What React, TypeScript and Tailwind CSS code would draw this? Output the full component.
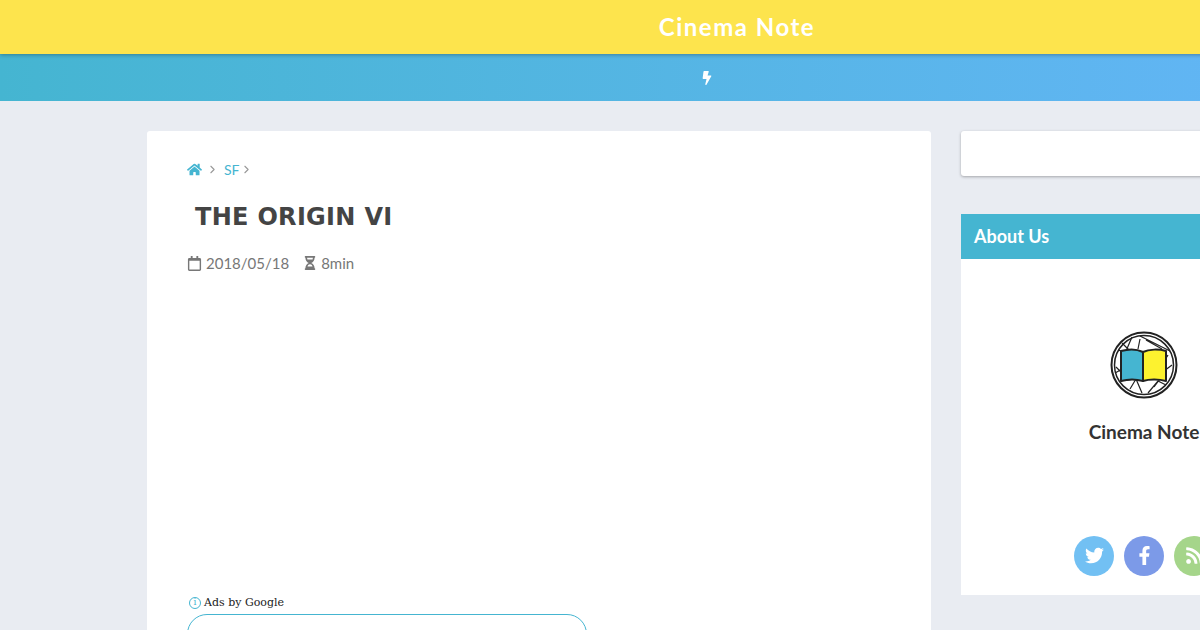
import { FaHome, FaBolt, FaTwitter, FaFacebookF, FaRss, FaRegCalendar, FaHourglassHalf } from "react-icons/fa";
import { LuChevronRight } from "react-icons/lu";

const round = { fontFamily: '"Lato", "Noto Sans", sans-serif' };

function Logo() {
  return (
    <svg width="68" height="68" viewBox="0 0 68 68" aria-hidden="true">
      <circle cx="34" cy="34" r="32.5" fill="#fff" stroke="#222" strokeWidth="2" />
      <circle cx="34" cy="34" r="29.5" fill="#fff" stroke="#222" strokeWidth="1.5" />
      <g stroke="#222" strokeWidth="1.2" fill="none">
        <path d="M8 19 L24 24 M12 12 L22 22 M22 6 L16 20 M30 5 L44 12 L60 20 M36 9 L52 18 M58 24 L52 34 M62 34 L54 40 M6 36 L14 44 M5 42 L16 36 M10 50 L26 48 L32 62 M20 58 L26 48 M38 62 L48 50 L56 54 M44 56 L50 48 M30 8 L28 18" />
      </g>
      <path d="M11 20 C18 18 27 18 33 21 L33 50 C26 48 18 48 11 50 Z" fill="#45b5d1" stroke="#222" strokeWidth="2" strokeLinejoin="round" />
      <path d="M33 21 C39 18 49 18 56 20 L56 50 C49 48 39 48 33 50 Z" fill="#fdf22f" stroke="#222" strokeWidth="2" strokeLinejoin="round" />
    </svg>
  );
}

export default function App() {
  return (
    <div className="h-[630px] w-[1200px] overflow-hidden bg-[#e9ecf2]">
      <div className="w-[1474px]">
        <header className="relative z-10 flex h-[54px] items-center justify-center bg-[#fde44d] shadow-[0_1px_4px_rgba(0,0,0,0.3)]">
          <span className="text-2xl font-bold tracking-[1.5px] text-white" style={round}>Cinema Note</span>
        </header>
        <div className="flex h-[47px] items-center justify-center bg-gradient-to-r from-[#45b5d1] to-[#66b5fb] pr-[60px]">
          <FaBolt className="text-[14px] text-white" />
        </div>
        <div className="flex gap-[30px] px-[147px] pt-[30px]">
          <main className="h-[600px] w-[784px] shrink-0 rounded-[3px] bg-white px-10 pt-[30px]">
            <nav className="flex h-4 items-center text-[14px] text-[#45b5d1]" style={round}>
              <FaHome className="text-[15px]" />
              <LuChevronRight className="ml-[4px] text-[13px] text-[#999]" />
              <span className="ml-[5px]">SF</span>
              <LuChevronRight className="text-[13px] text-[#999]" />
            </nav>
            <h1 className="mt-[22px] pl-2 text-[24px] leading-[36px] font-bold tracking-[0.3px] text-[#444]" style={{ fontFamily: '"DejaVu Sans", sans-serif' }}>THE ORIGIN VI</h1>
            <div className="mt-[18px] flex h-5 items-center text-[15px] text-[#777]" style={round}>
              <FaRegCalendar className="text-[15px]" />
              <span className="ml-[4px]">2018/05/18</span>
              <FaHourglassHalf className="ml-[14px] text-[14px]" />
              <span className="ml-[4px]">8min</span>
            </div>
            <div className="mt-[322px] flex h-4 items-center pl-[2px] text-[11px] text-[#222]" style={{ fontFamily: '"DejaVu Serif", serif' }}>
              <span className="flex h-3 w-3 items-center justify-center rounded-full border border-[#45b5d1] text-[9px] text-[#45b5d1]">i</span>
              <span className="ml-[3px]">Ads by Google</span>
            </div>
            <div className="mt-[3px] h-[60px] w-[400px] rounded-[20px] border border-[#45b5d1]" />
          </main>
          <aside className="w-[366px] shrink-0">
            <div className="h-[45px] rounded-[3px] bg-white shadow-[0_1px_3px_rgba(0,0,0,0.3)]" />
            <section className="mt-[38px] bg-white">
              <h2 className="flex h-[45px] items-center bg-[#45b5d1] pl-[13px] text-[18px] font-bold text-white" style={round}>About Us</h2>
              <div className="flex h-[336px] flex-col items-center">
                <div className="mt-[72px]"><Logo /></div>
                <p className="mt-[19px] text-[19px] font-bold text-[#333]" style={round}>Cinema Note</p>
                <div className="mt-[89px] flex gap-[10px]">
                  <span className="flex h-10 w-10 items-center justify-center rounded-full bg-[#72c0f3] text-[19px] text-white"><FaTwitter /></span>
                  <span className="flex h-10 w-10 items-center justify-center rounded-full bg-[#7c9ae8] text-[19px] text-white"><FaFacebookF /></span>
                  <span className="flex h-10 w-10 items-center justify-center rounded-full bg-[#a5d58a] text-[19px] text-white"><FaRss /></span>
                </div>
              </div>
            </section>
          </aside>
        </div>
      </div>
    </div>
  );
}
